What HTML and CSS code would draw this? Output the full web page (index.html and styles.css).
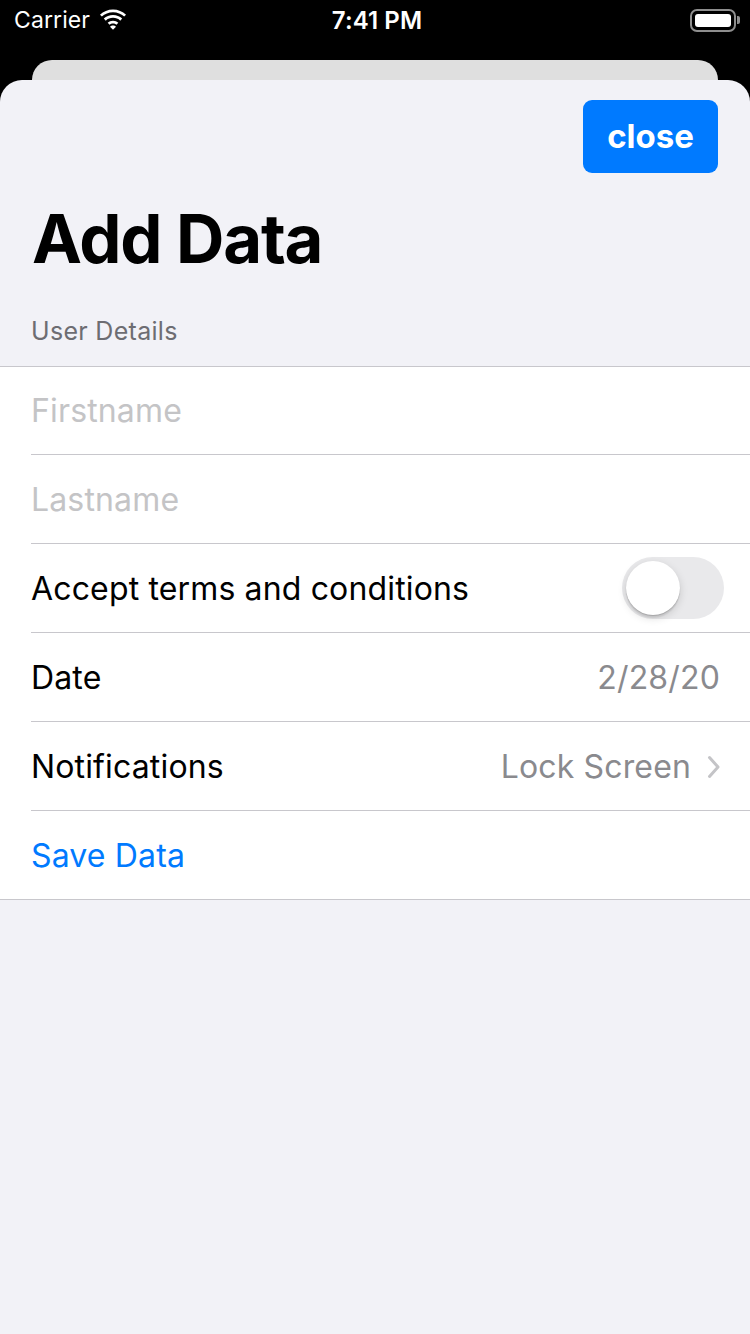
FILE: index.html
```html
<!DOCTYPE html>
<html>
<head>
<meta charset="utf-8">
<link rel="stylesheet" href="styles.css">
</head>
<body>
<div class="screen">
  <div class="statusbar">
    <div class="sb-left">
      <span class="carrier">Carrier</span>
      <svg class="wifi" width="30" height="23" viewBox="0 0 32 24">
        <path d="M16 4.2c4.6 0 8.8 1.8 11.9 4.7l2-2.1C26.3 3.3 21.4 1.2 16 1.2S5.7 3.3 2.1 6.8l2 2.1C7.2 6 11.4 4.2 16 4.2z" fill="#fff"/>
        <path d="M16 10.2c3 0 5.7 1.1 7.7 3l2.1-2.2C23.2 8.6 19.8 7.2 16 7.2s-7.2 1.4-9.8 3.8l2.1 2.2c2-1.9 4.7-3 7.7-3z" fill="#fff"/>
        <path d="M16 16.2c1.4 0 2.7.5 3.6 1.4l2.1-2.2c-1.5-1.4-3.5-2.2-5.7-2.2s-4.2.8-5.7 2.2l2.1 2.2c.9-.9 2.2-1.4 3.6-1.4z" fill="#fff"/>
        <path d="M16 23l3.2-3.3c-.8-.8-2-1.3-3.2-1.3s-2.4.5-3.2 1.3z" fill="#fff"/>
      </svg>
    </div>
    <div class="time">7:41 PM</div>
    <div class="sb-right">
      <div class="battery"><div class="battery-fill"></div></div>
      <div class="battery-nub"></div>
    </div>
  </div>
  <div class="back-card"></div>
  <div class="sheet">
    <div class="sheet-top">
      <button class="close-btn">close</button>
    </div>
    <h1 class="title">Add Data</h1>
    <div class="section-header">User Details</div>
    <div class="list">
      <div class="row first"><span class="placeholder">Firstname</span></div>
      <div class="row"><span class="placeholder">Lastname</span></div>
      <div class="row">
        <span class="label">Accept terms and conditions</span>
        <div class="toggle"><div class="knob"></div></div>
      </div>
      <div class="row">
        <span class="label">Date</span>
        <span class="value date">2/28/20</span>
      </div>
      <div class="row">
        <span class="label">Notifications</span>
        <span class="value-wrap">
          <span class="value">Lock Screen</span>
          <svg class="chevron" width="14" height="24" viewBox="0 0 14 24">
            <path d="M2.5 2.5 L11 12 L2.5 21.5" fill="none" stroke="#c4c4c7" stroke-width="3" stroke-linecap="round" stroke-linejoin="round"/>
          </svg>
        </span>
      </div>
      <div class="row last"><span class="link">Save Data</span></div>
    </div>
  </div>
</div>
</body>
</html>
```

FILE: styles.css
```css
* { box-sizing: border-box; }
html, body {
  margin: 0;
  padding: 0;
  background: #000;
}
body {
  width: 750px;
  height: 1334px;
  overflow: hidden;
  font-family: Inter, "Liberation Sans", sans-serif;
}
.screen {
  position: relative;
  width: 750px;
  height: 1334px;
  background: #000;
  display: flex;
  flex-direction: column;
}
.statusbar {
  height: 40px;
  display: flex;
  align-items: center;
  justify-content: space-between;
  padding: 0 10px 0 14px;
  color: #fff;
}
.sb-left {
  display: flex;
  align-items: center;
  gap: 8px;
  width: 200px;
}
.carrier {
  font-size: 23px;
  letter-spacing: 0.1px;
}
.wifi { margin-top: -1px; }
.time {
  font-size: 24px;
  font-weight: 600;
  letter-spacing: 0.1px;
}
.sb-right {
  width: 200px;
  display: flex;
  justify-content: flex-end;
  align-items: center;
}
.battery {
  width: 46px;
  height: 23px;
  border: 2px solid #8e8e8e;
  border-radius: 7px;
  padding: 3px;
}
.battery-fill {
  width: 100%;
  height: 100%;
  background: #fff;
  border-radius: 3px;
}
.battery-nub {
  width: 3px;
  height: 8px;
  background: #8e8e8e;
  border-radius: 0 2px 2px 0;
  margin-left: 1px;
}
.back-card {
  margin: 20px 32px 0 32px;
  height: 40px;
  background: #dfdfdf;
  border-radius: 20px 20px 0 0;
}
.sheet {
  position: absolute;
  top: 80px;
  left: 0;
  width: 750px;
  height: 1254px;
  background: #f2f2f7;
  border-radius: 22px 22px 0 0;
}
.sheet-top {
  display: flex;
  justify-content: flex-end;
  padding: 20px 32px 0 0;
}
.close-btn {
  width: 135px;
  height: 73px;
  border: none;
  border-radius: 9px;
  background: #007aff;
  color: #fff;
  font-family: Inter, "Liberation Sans", sans-serif;
  font-size: 33px;
  font-weight: 700;
  padding: 0 0 2px 0;
}
.title {
  margin: 26px 0 0 32px;
  font-size: 67px;
  font-weight: 700;
  letter-spacing: -1.2px;
  line-height: 80px;
  color: #000;
}
.section-header {
  margin: 37px 0 0 31px;
  height: 50px;
  font-size: 25px;
  letter-spacing: 0.3px;
  color: #6d6d72;
  line-height: 30px;
}
.list {
  background: #fff;
  border-top: 1px solid #c8c7cc;
  border-bottom: 1px solid #c8c7cc;
}
.row {
  margin-left: 31px;
  height: 89px;
  padding-right: 27px;
  border-bottom: 1px solid #c8c7cc;
  display: flex;
  align-items: center;
  justify-content: space-between;
  font-size: 32px;
  letter-spacing: 0.15px;
}
.row.first { height: 88px; }
.row.last { border-bottom: none; height: 88px; }
.placeholder { color: #c4c4c6; }
.label { color: #000; }
.value { color: #8a8a8e; }
.value.date { margin-right: 3px; }
.value-wrap {
  display: flex;
  align-items: center;
  gap: 16px;
  margin-right: 2px;
}
.chevron { margin-top: 1px; }
.link { color: #007aff; }
.toggle {
  width: 102px;
  height: 62px;
  border-radius: 31px;
  background: #e9e9eb;
  padding: 4px;
  margin-right: -1px;
}
.knob {
  width: 54px;
  height: 54px;
  border-radius: 50%;
  background: #fff;
  box-shadow: 0 3px 8px rgba(0,0,0,0.15), 0 1px 1px rgba(0,0,0,0.16), 0 3px 1px rgba(0,0,0,0.06);
}
```
